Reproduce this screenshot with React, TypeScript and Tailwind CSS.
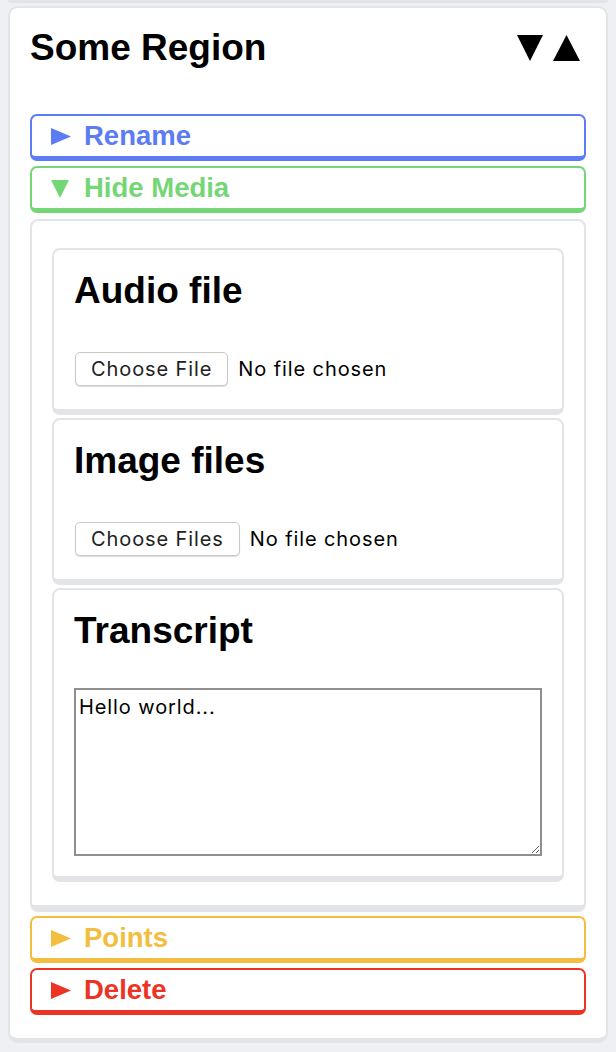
import type { ReactNode } from 'react';

const heading = "font-['Liberation_Sans',Arial,sans-serif] font-bold";
const ui = "font-['Inter','Noto_Sans',sans-serif] tracking-[0.045em]";

type Tone = 'blue' | 'green' | 'yellow' | 'red';

const toneClass: Record<Tone, string> = {
  blue: 'border-[#5b7cf3] text-[#5b7cf3]',
  green: 'border-[#74d675] text-[#74d675]',
  yellow: 'border-[#f3bd40] text-[#f3bd40]',
  red: 'border-[#eb3424] text-[#eb3424]',
};

function Caret({ open }: { open: boolean }) {
  return (
    <span className="flex w-[33px] shrink-0 items-center">
      {open ? (
        <svg width="18" height="18" viewBox="0 0 18 18" className="mt-[1px]">
          <polygon points="0,0 18,0 9,18" fill="currentColor" />
        </svg>
      ) : (
        <svg width="20" height="17" viewBox="0 0 20 17" className="mt-[1px]">
          <polygon points="0,0 20,8.5 0,17" fill="currentColor" />
        </svg>
      )}
    </span>
  );
}

function Toggle({
  tone,
  label,
  open = false,
  className = '',
}: {
  tone: Tone;
  label: string;
  open?: boolean;
  className?: string;
}) {
  return (
    <button
      type="button"
      className={`flex h-[47px] w-full items-center rounded-[7px] border-2 border-b-[5px] bg-white px-[19px] text-left ${toneClass[tone]} ${className}`}
    >
      <Caret open={open} />
      <span className={`${heading} text-[27.5px] leading-[32px]`}>{label}</span>
    </button>
  );
}

function Card({ title, children, className = '' }: { title: string; children: ReactNode; className?: string }) {
  return (
    <div className={`rounded-[8px] border-2 border-b-[6px] border-[#e3e4e8] bg-white px-[20px] pt-[20px] pb-[20px] ${className}`}>
      <h2 className={`${heading} mb-[36px] text-[37px] leading-[42px] text-black`}>{title}</h2>
      {children}
    </div>
  );
}

function FilePicker({ label }: { label: string }) {
  return (
    <div className="flex h-[41px] items-center gap-[10px]">
      <button
        type="button"
        className={`${ui} ml-[1px] h-[34px] rounded-[5px] border border-[#c9c9c9] bg-white px-[15px] text-[20px] leading-[24px] text-[#222] shadow-[0_1px_1px_rgba(0,0,0,0.14)]`}
      >
        {label}
      </button>
      <span className={`${ui} text-[20px] leading-[24px] text-black`}>No file chosen</span>
    </div>
  );
}

export default function App() {
  return (
    <div className="min-h-screen bg-[#eff0f3]">
      {/* tail of the previous region card */}
      <div className="mx-[8px] h-[3px] rounded-b-[6px] bg-[#e3e4e8]" />

      <section className="mx-[8px] mt-[3px] rounded-[10px] border-2 border-b-[5px] border-[#e3e4e8] bg-white px-[20px] pt-[19px] pb-[23px]">
        <header className="mb-[45px] flex h-[42px] items-center justify-between">
          <h1 className={`${heading} text-[37px] leading-[42px] text-black`}>Some Region</h1>
          <div className="mr-[6px] flex items-center gap-[10px] text-black">
            <svg width="26" height="26" viewBox="0 0 26 26">
              <polygon points="0,0 26,0 13,26" fill="currentColor" />
            </svg>
            <svg width="27" height="26" viewBox="0 0 27 26">
              <polygon points="13.5,0 27,26 0,26" fill="currentColor" />
            </svg>
          </div>
        </header>

        <Toggle tone="blue" label="Rename" />
        <Toggle tone="green" label="Hide Media" open className="mt-[5px]" />

        <div className="mt-[6px] rounded-[8px] border-2 border-b-[7px] border-[#e3e4e8] bg-white px-[20px] pt-[27px] pb-[23px]">
          <Card title="Audio file">
            <FilePicker label="Choose File" />
          </Card>
          <Card title="Image files" className="mt-[3px]">
            <FilePicker label="Choose Files" />
          </Card>
          <Card title="Transcript" className="mt-[3px]">
            <textarea
              defaultValue="Hello world..."
              className={`${ui} block h-[168px] w-full border-2 border-[#8f8f8f] bg-white px-[3px] pt-[5px] text-[20px] leading-[24px] text-black outline-none`}
            />
          </Card>
        </div>

        <Toggle tone="yellow" label="Points" className="mt-[4px]" />
        <Toggle tone="red" label="Delete" className="mt-[5px]" />
      </section>
    </div>
  );
}
